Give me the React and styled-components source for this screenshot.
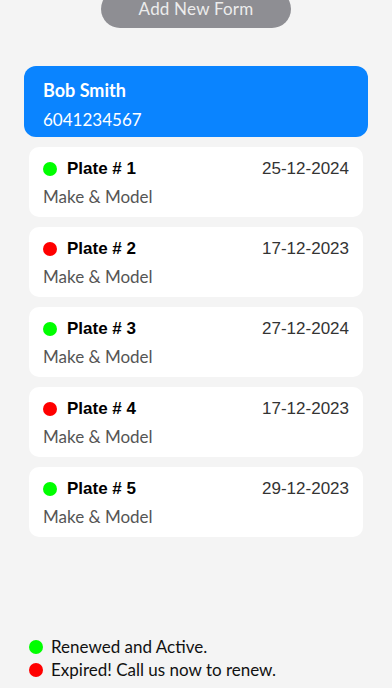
import React from 'react'
import styled, { createGlobalStyle } from 'styled-components'

const GlobalStyle = createGlobalStyle`
  html, body {
    margin: 0;
    padding: 0;
    background: #ffffff;
  }
  * {
    box-sizing: border-box;
  }
`

const Page = styled.div`
  height: 688px;
  background: #f4f4f4;
  display: flex;
  flex-direction: column;
  overflow: hidden;
  font-family: Lato, 'Open Sans', sans-serif;
`

const AddButton = styled.button`
  align-self: center;
  width: 190px;
  height: 38px;
  margin-top: -10px;
  border: none;
  border-radius: 19px;
  background: #8e8e93;
  color: #ececec;
  font-family: Lato, sans-serif;
  font-size: 17px;
  line-height: 18px;
  letter-spacing: 0.2px;
  padding: 0;
`

const OwnerCard = styled.div`
  margin: 38px 24px 0;
  height: 71px;
  border-radius: 12px;
  background: #0a84ff;
  color: #ffffff;
  padding: 13px 19px 0;
  display: flex;
  flex-direction: column;
  gap: 9px;
`

const OwnerName = styled.div`
  font-size: 18px;
  font-weight: 700;
  line-height: 22px;
`

const OwnerPhone = styled.div`
  font-size: 17px;
  line-height: 20px;
`

const PlateList = styled.div`
  margin: 10px 29px 0;
  display: flex;
  flex-direction: column;
  gap: 10px;
`

const PlateCard = styled.div`
  height: 70px;
  background: #ffffff;
  border-radius: 10px;
  padding: 12px 14px 0;
  display: flex;
  flex-direction: column;
  gap: 8px;
`

const PlateRow = styled.div`
  display: flex;
  align-items: center;
`

const Dot = styled.span`
  width: 14px;
  height: 14px;
  border-radius: 50%;
  flex-shrink: 0;
  background: ${(p) => (p.$active ? '#00ff00' : '#ff0000')};
`

const PlateName = styled.span`
  margin-left: 10px;
  font-family: 'Liberation Sans', Arial, sans-serif;
  font-weight: 700;
  font-size: 17px;
  color: #000000;
`

const PlateDate = styled.span`
  margin-left: auto;
  font-family: 'Liberation Sans', Arial, sans-serif;
  font-size: 17px;
  color: #333333;
`

const MakeModel = styled.div`
  font-size: 17px;
  color: #555555;
  line-height: 20px;
`

const Legend = styled.div`
  margin: auto 29px 9px;
  display: flex;
  flex-direction: column;
  gap: 5px;
`

const LegendRow = styled.div`
  display: flex;
  align-items: center;
  gap: 8px;
  font-size: 17px;
  color: #111111;
  line-height: 18px;
`

const plates = [
  { id: 1, active: true, date: '25-12-2024' },
  { id: 2, active: false, date: '17-12-2023' },
  { id: 3, active: true, date: '27-12-2024' },
  { id: 4, active: false, date: '17-12-2023' },
  { id: 5, active: true, date: '29-12-2023' },
]

const App = () => (
  <>
    <GlobalStyle />
    <Page>
      <AddButton>Add New Form</AddButton>
      <OwnerCard>
        <OwnerName>Bob Smith</OwnerName>
        <OwnerPhone>6041234567</OwnerPhone>
      </OwnerCard>
      <PlateList>
        {plates.map((p) => (
          <PlateCard key={p.id}>
            <PlateRow>
              <Dot $active={p.active} />
              <PlateName>Plate # {p.id}</PlateName>
              <PlateDate>{p.date}</PlateDate>
            </PlateRow>
            <MakeModel>Make &amp; Model</MakeModel>
          </PlateCard>
        ))}
      </PlateList>
      <Legend>
        <LegendRow>
          <Dot $active />
          Renewed and Active.
        </LegendRow>
        <LegendRow>
          <Dot />
          Expired! Call us now to renew.
        </LegendRow>
      </Legend>
    </Page>
  </>
)

export default App
